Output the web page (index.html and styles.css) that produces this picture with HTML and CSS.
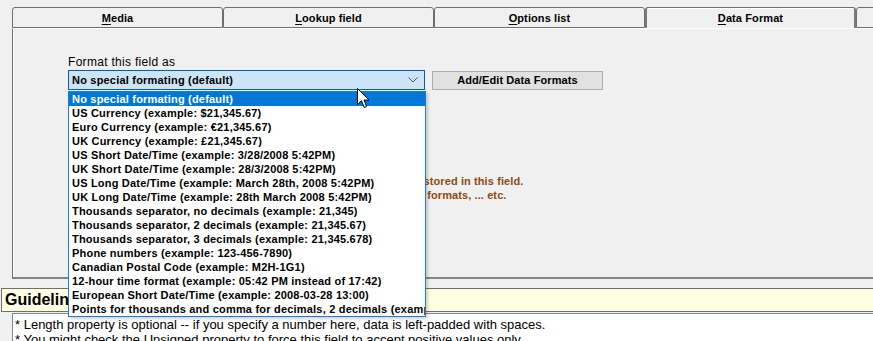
FILE: index.html
```html
<!DOCTYPE html>
<html>
<head>
<meta charset="utf-8">
<link rel="stylesheet" href="styles.css">
</head>
<body>
<div class="tabbar">
  <div class="tab"><span class="acc">M</span>edia</div>
  <div class="tab"><span class="acc">L</span>ookup field</div>
  <div class="tab"><span class="acc">O</span>ptions list</div>
  <div class="tab active"><span class="acc">D</span>ata Format</div>
  <div class="tab"></div>
</div>
<div class="panel">
  <div class="label">Format this field as</div>
  <div class="row">
    <div class="select">
      <span>No special formating (default)</span>
      <svg class="chev" width="10" height="6" viewBox="0 0 10 6"><path d="M0.5 0.5 L5 5 L9.5 0.5" fill="none" stroke="#555" stroke-width="1"/></svg>
    </div>
    <div class="btn">Add/Edit Data Formats</div>
  </div>
  <div class="note">
    <div class="line1">is stored in this field.</div>
    <div class="line2">date formats, ... etc.</div>
  </div>
  <ul class="list">
    <li class="sel">No special formating (default)</li>
    <li>US Currency (example: $21,345.67)</li>
    <li>Euro Currency (example: €21,345.67)</li>
    <li>UK Currency (example: £21,345.67)</li>
    <li>US Short Date/Time (example: 3/28/2008 5:42PM)</li>
    <li>UK Short Date/Time (example: 28/3/2008 5:42PM)</li>
    <li>US Long Date/Time (example: March 28th, 2008 5:42PM)</li>
    <li>UK Long Date/Time (example: 28th March 2008 5:42PM)</li>
    <li>Thousands separator, no decimals (example: 21,345)</li>
    <li>Thousands separator, 2 decimals (example: 21,345.67)</li>
    <li>Thousands separator, 3 decimals (example: 21,345.678)</li>
    <li>Phone numbers (example: 123-456-7890)</li>
    <li>Canadian Postal Code (example: M2H-1G1)</li>
    <li>12-hour time format (example: 05:42 PM instead of 17:42)</li>
    <li>European Short Date/Time (example: 2008-03-28 13:00)</li>
    <li>Points for thousands and comma for decimals, 2 decimals (example: 21.345,67)</li>
  </ul>
</div>
<div class="guide">Guidelines</div>
<div class="guide-text">
  <div>* Length property is optional -- if you specify a number here, data is left-padded with spaces.</div>
  <div>* You might check the Unsigned property to force this field to accept positive values only.</div>
</div>
<svg class="cursor" width="13" height="21" viewBox="0 0 13 21"><path d="M0.5 0.5 L0.5 16.5 L4.5 12.8 L7.2 19.5 L9.6 18.5 L7 12 L12 12 Z" fill="#fff" stroke="#000" stroke-width="1" stroke-linejoin="miter"/></svg>
</body>
</html>
```
FILE: styles.css
```css
html, body {
  margin: 0;
  padding: 0;
}
body {
  background: #f0f0f0;
  font-family: "Liberation Sans", Arial, sans-serif;
  width: 873px;
  height: 341px;
  overflow: hidden;
  position: relative;
}
.tabbar {
  display: flex;
  margin: 7px 0 0 12px;
  height: 21px;
}
.tab {
  flex: 0 0 211px;
  box-sizing: border-box;
  height: 21px;
  border: 1px solid #6f6f6f;
  border-radius: 3px 3px 0 0;
  background: #f0f0f0;
  font-size: 11px;
  font-weight: bold;
  text-align: center;
  line-height: 20px;
  color: #000;
  letter-spacing: 0.1px;
}
.tab.active {
  border-bottom: none;
  border-left: 2px solid #7a7a7a;
  border-right: 2px solid #7a7a7a;
  background: #f0f0f0;
  box-shadow: inset 0 1px 0 #fff;
}
.acc {
  text-decoration: underline;
  text-underline-offset: 2px;
}
.panel {
  position: relative;
  margin-left: 12px;
  margin-right: -20px;
  height: 222px;
  border-left: 1px solid #6f6f6f;
  border-top: 1px solid #fff;
  border-bottom: 2px solid #858585;
  box-shadow: inset 1px 0 0 #fff;
  padding: 26px 0 0 55px;
  box-sizing: content-box;
}
.label {
  font-size: 12px;
  line-height: 14px;
  letter-spacing: 0.3px;
  color: #000;
}
.row {
  display: flex;
  align-items: flex-start;
  gap: 7px;
  margin-top: 1px;
}
.select {
  width: 357px;
  height: 20px;
  box-sizing: border-box;
  border: 1px solid #0a5aa8;
  background: #cce4f7;
  display: flex;
  align-items: center;
  justify-content: space-between;
  padding: 0 6px 0 3px;
  font-size: 11px;
  font-weight: bold;
  letter-spacing: 0.2px;
}
.chev {
  display: block;
}
.btn {
  margin-top: 1px;
  width: 171px;
  height: 19px;
  box-sizing: border-box;
  border: 1px solid #adadad;
  background: #e1e1e1;
  font-size: 11px;
  font-weight: bold;
  text-align: center;
  line-height: 17px;
  letter-spacing: 0.1px;
}
.note {
  margin-top: 84px;
  font-size: 11px;
  font-weight: bold;
  line-height: 14px;
  color: #8f4a12;
  letter-spacing: 0.1px;
}
.line1 {
  margin-left: 343px;
}
.line2 {
  margin-left: 333px;
}
.list {
  position: absolute;
  left: 55px;
  top: 62px;
  z-index: 2;
  width: 358px;
  box-sizing: border-box;
  margin: 0;
  padding: 0;
  list-style: none;
  background: #fff;
  border: 1px solid #1a7fd4;
  box-shadow: 2px 2px 3px rgba(0, 0, 0, 0.18);
  overflow: hidden;
}
.list li {
  height: 14px;
  line-height: 14px;
  padding-left: 3px;
  font-size: 11px;
  font-weight: bold;
  white-space: nowrap;
  letter-spacing: 0.2px;
  color: #000;
}
.list li.sel {
  background: #0078d7;
  color: #fff;
}
.guide {
  margin: 9px 0 0 1px;
  height: 22px;
  border: 1px solid #6f6f6f;
  border-right: none;
  background: #ffffe1;
  font-size: 16px;
  font-weight: bold;
  line-height: 22px;
  padding-left: 3px;
}
.guide-text {
  margin: 1px 0 0 12px;
  background: #fff;
  border: 1px solid #828790;
  border-right: none;
  padding: 3px 0 0 2px;
  font-size: 13px;
  line-height: 15px;
  color: #000;
  height: 60px;
}
.cursor {
  position: absolute;
  left: 357px;
  top: 88px;
  z-index: 5;
}
```
